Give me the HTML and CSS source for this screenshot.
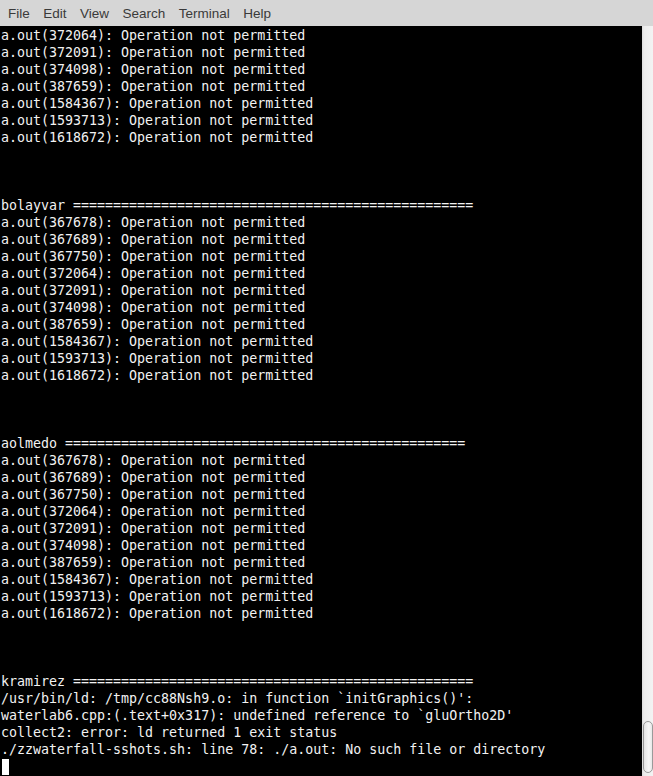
FILE: index.html
```html
<!DOCTYPE html>
<html>
<head>
<meta charset="utf-8">
<link rel="stylesheet" href="styles.css">
</head>
<body>
<div class="window">
  <div class="menubar">
    <span class="menu-item">File</span>
    <span class="menu-item">Edit</span>
    <span class="menu-item">View</span>
    <span class="menu-item">Search</span>
    <span class="menu-item">Terminal</span>
    <span class="menu-item">Help</span>
  </div>
  <div class="main">
    <pre class="term">a.out(372064): Operation not permitted
a.out(372091): Operation not permitted
a.out(374098): Operation not permitted
a.out(387659): Operation not permitted
a.out(1584367): Operation not permitted
a.out(1593713): Operation not permitted
a.out(1618672): Operation not permitted



bolayvar ==================================================
a.out(367678): Operation not permitted
a.out(367689): Operation not permitted
a.out(367750): Operation not permitted
a.out(372064): Operation not permitted
a.out(372091): Operation not permitted
a.out(374098): Operation not permitted
a.out(387659): Operation not permitted
a.out(1584367): Operation not permitted
a.out(1593713): Operation not permitted
a.out(1618672): Operation not permitted



aolmedo ==================================================
a.out(367678): Operation not permitted
a.out(367689): Operation not permitted
a.out(367750): Operation not permitted
a.out(372064): Operation not permitted
a.out(372091): Operation not permitted
a.out(374098): Operation not permitted
a.out(387659): Operation not permitted
a.out(1584367): Operation not permitted
a.out(1593713): Operation not permitted
a.out(1618672): Operation not permitted



kramirez ==================================================
/usr/bin/ld: /tmp/cc88Nsh9.o: in function `initGraphics()':
waterlab6.cpp:(.text+0x317): undefined reference to `gluOrtho2D'
collect2: error: ld returned 1 exit status
./zzwaterfall-sshots.sh: line 78: ./a.out: No such file or directory
<span class="cursor"></span></pre>
    <div class="scrollbar">
      <div class="thumb"></div>
    </div>
  </div>
</div>
</body>
</html>
```

FILE: styles.css
```css
html, body {
  margin: 0;
  padding: 0;
  background: #000;
}

.window {
  width: 653px;
  height: 776px;
  display: flex;
  flex-direction: column;
  overflow: hidden;
}

.menubar {
  height: 26px;
  flex: none;
  background: #d6d6d6;
  display: flex;
  align-items: center;
  padding-left: 2px;
  font-family: "Liberation Sans", Arial, sans-serif;
  font-size: 13.5px;
  color: #3a3a3a;
}

.menu-item {
  padding: 0 6px;
  margin-right: 1.5px;
}

.main {
  flex: 1;
  display: flex;
  min-height: 0;
}

.term {
  flex: 1;
  margin: 0;
  padding: 1px 0 0 1px;
  background: #000;
  color: #f2f2f2;
  font-family: "DejaVu Sans Mono", monospace;
  font-size: 13.3px;
  line-height: 17px;
  white-space: pre;
  overflow: hidden;
}

.cursor {
  display: inline-block;
  width: 7px;
  height: 16px;
  margin-left: 1px;
  background: #fff;
  vertical-align: -4px;
}

.scrollbar {
  width: 11px;
  flex: none;
  background: linear-gradient(to right, #dcdcdc 0px, #ececec 2px, #f3f3f3 100%);
  display: flex;
  flex-direction: column;
  justify-content: flex-end;
  padding-bottom: 3px;
  box-sizing: border-box;
}

.thumb {
  height: 50px;
  margin: 0 0 0 1px;
  border: 1px solid #9a9a9a;
  border-radius: 5px;
  background: linear-gradient(to right, #e4e4e4, #f8f8f8 60%, #e8e8e8);
}
```
